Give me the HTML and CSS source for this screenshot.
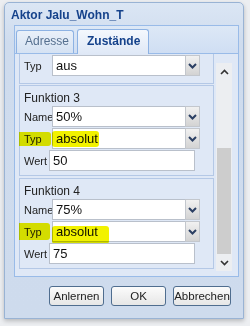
FILE: index.html
```html
<!DOCTYPE html>
<html>
<head>
<meta charset="utf-8">
<link rel="stylesheet" href="styles.css">
</head>
<body>
<div class="win">
  <div class="title">Aktor Jalu_Wohn_T</div>
  <div class="tabpanel">
    <div class="strip">
      <div class="tab">Adresse</div>
      <div class="tab active">Zustände</div>
    </div>
    <div class="tbody">
      <div class="scroll">
        <div class="fs cut">
          <div class="row"><span class="lbl">Typ</span><div class="combo"><div class="inp">aus</div><div class="trig"><svg width="9" height="6" viewBox="0 0 9 6"><path d="M1 1 L4.5 4.5 L8 1" fill="none" stroke="#2b3f63" stroke-width="2"/></svg></div></div></div>
        </div>
        <div class="fs">
          <div class="legend">Funktion 3</div>
          <div class="row"><span class="lbl">Name</span><div class="combo"><div class="inp">50%</div><div class="trig"><svg width="9" height="6" viewBox="0 0 9 6"><path d="M1 1 L4.5 4.5 L8 1" fill="none" stroke="#2b3f63" stroke-width="2"/></svg></div></div></div>
          <div class="row"><span class="lbl">Typ</span><div class="combo"><div class="inp">absolut</div><div class="trig"><svg width="9" height="6" viewBox="0 0 9 6"><path d="M1 1 L4.5 4.5 L8 1" fill="none" stroke="#2b3f63" stroke-width="2"/></svg></div></div><span class="hl hl-a"></span><span class="hl hl-b"></span></div>
          <div class="row"><span class="lbl short">Wert</span><div class="text">50</div></div>
        </div>
        <div class="fs">
          <div class="legend">Funktion 4</div>
          <div class="row"><span class="lbl">Name</span><div class="combo"><div class="inp">75%</div><div class="trig"><svg width="9" height="6" viewBox="0 0 9 6"><path d="M1 1 L4.5 4.5 L8 1" fill="none" stroke="#2b3f63" stroke-width="2"/></svg></div></div></div>
          <div class="row"><span class="lbl">Typ</span><div class="combo"><div class="inp">absolut</div><div class="trig"><svg width="9" height="6" viewBox="0 0 9 6"><path d="M1 1 L4.5 4.5 L8 1" fill="none" stroke="#2b3f63" stroke-width="2"/></svg></div></div><span class="hl hl-c"></span><span class="hl hl-d"></span></div>
          <div class="row"><span class="lbl short">Wert</span><div class="text">75</div></div>
        </div>
      </div>
      <div class="vscroll">
        <div class="sbtn"><svg width="9" height="6" viewBox="0 0 9 6"><path d="M1 5 L4.5 1.5 L8 5" fill="none" stroke="#333" stroke-width="1.6"/></svg></div>
        <div class="track"><div class="thumb"></div></div>
        <div class="sbtn"><svg width="9" height="6" viewBox="0 0 9 6"><path d="M1 1 L4.5 4.5 L8 1" fill="none" stroke="#333" stroke-width="1.6"/></svg></div>
      </div>
    </div>
  </div>
  <div class="buttons">
    <button class="btn">Anlernen</button>
    <button class="btn">OK</button>
    <button class="btn wide">Abbrechen</button>
  </div>
</div>
</body>
</html>
```

FILE: styles.css
```css
* { box-sizing: border-box; }
html, body { margin: 0; padding: 0; }
body {
  background: #eceef1;
  width: 250px;
  height: 326px;
  overflow: hidden;
  font-family: "Liberation Sans", Arial, sans-serif;
}
.win {
  margin: 2px 0 0 4px;
  width: 240px;
  height: 317px;
  border: 1px solid #99b3d4;
  border-radius: 5px 5px 0 0;
  background: linear-gradient(#dbe6f4, #cfdcee 40px, #cedbed);
  box-shadow: 0 2px 4px rgba(0,0,0,0.22);
  display: flex;
  flex-direction: column;
}
.title {
  height: 22px;
  padding: 5px 0 0 6px;
  font-size: 12px;
  font-weight: bold;
  color: #15428b;
  line-height: 14px;
}
.tabpanel {
  margin-left: 9px;
  width: 225px;
}
.strip {
  height: 28px;
  border: 1px solid #99bbe8;
  border-bottom: none;
  background: linear-gradient(#dde8f6, #cfdef3);
  display: flex;
  align-items: flex-end;
  padding-left: 1px;
  gap: 3px;
}
.tab {
  height: 23px;
  border: 1px solid #8db2e3;
  border-bottom: none;
  border-radius: 3px 3px 0 0;
  background: linear-gradient(#e9f0f9, #d5e2f3);
  color: #56708f;
  font-size: 12px;
  line-height: 21px;
  padding: 0 6px 0 8px;
  width: 58px;
}
.tab.active {
  height: 25px;
  width: 72px;
  margin-bottom: -1px;
  background: linear-gradient(#f4f8fd, #dfe8f6);
  color: #15428b;
  font-weight: bold;
  font-size: 12px;
  line-height: 22px;
  padding-left: 9px;
  position: relative;
}
.tbody {
  height: 224px;
  border: 1px solid #99bbe8;
  background: #dfe8f6;
  display: flex;
  padding: 0 4px 5px 4px;
}
.scroll {
  width: 195px;
  overflow: hidden;
}
.fs {
  border: 1px solid #b4c8e6;
  padding: 0 0 3px 4px;
  margin-bottom: 2px;
}
.fs.cut {
  border-top: none;
  padding-top: 1px;
  padding-bottom: 6px;
  margin-bottom: 1px;
}
.legend {
  height: 20px;
  padding-top: 6px;
  font-size: 12px;
  line-height: 13px;
  color: #222;
}
.row {
  display: flex;
  align-items: center;
  height: 21px;
  margin-bottom: 1px;
  position: relative;
}
.lbl {
  width: 28px;
  font-size: 11px;
  color: #222;
}
.lbl.short { width: 25px; }
.combo {
  display: flex;
  width: 148px;
  height: 21px;
}
.inp {
  flex: 1;
  border: 1px solid #b9c0cb;
  border-right: none;
  background: #fff;
  font-size: 13px;
  line-height: 19px;
  padding-left: 3px;
  color: #111;
}
.trig {
  width: 15px;
  border: 1px solid #c3c7cd;
  background: linear-gradient(#f1f1f1, #d3d3d3);
  display: flex;
  align-items: center;
  justify-content: center;
}
.text {
  width: 146px;
  height: 21px;
  border: 1px solid #b9c0cb;
  background: #fff;
  font-size: 13px;
  line-height: 19px;
  padding-left: 3px;
  color: #111;
}
.hl {
  position: absolute;
  background: #f2f200;
  mix-blend-mode: multiply;
  border-radius: 3px;
}
.hl-a { left: -11px; top: 4px; width: 38px; height: 14px; }
.hl-b { left: 28px; top: 3px; width: 47px; height: 16px; }
.hl-c { left: -14px; top: 2px; width: 40px; height: 17px; }
.hl-d { left: 28px; top: 5px; width: 57px; height: 18px; }
.vscroll {
  width: 16px;
  margin: 9px 0 0 2px;
  display: flex;
  flex-direction: column;
  background: #eceef1;
}
.sbtn {
  height: 17px;
  display: flex;
  align-items: center;
  justify-content: center;
}
.track {
  flex: 1;
  display: flex;
  flex-direction: column;
  justify-content: flex-end;
  padding: 0 1px;
}
.thumb {
  height: 106px;
  background: #cdcdcd;
}
.buttons {
  display: flex;
  justify-content: flex-end;
  gap: 7px;
  padding: 9px 12px 0 0;
}
.btn {
  width: 55px;
  height: 20px;
  border: 1px solid #4f6d8f;
  border-radius: 3px;
  background: linear-gradient(#fbfbfb, #e6e6e6);
  font-family: "Liberation Sans", Arial, sans-serif;
  font-size: 11.5px;
  color: #222;
  padding: 0;
}
.btn.wide { width: 58px; }
```
